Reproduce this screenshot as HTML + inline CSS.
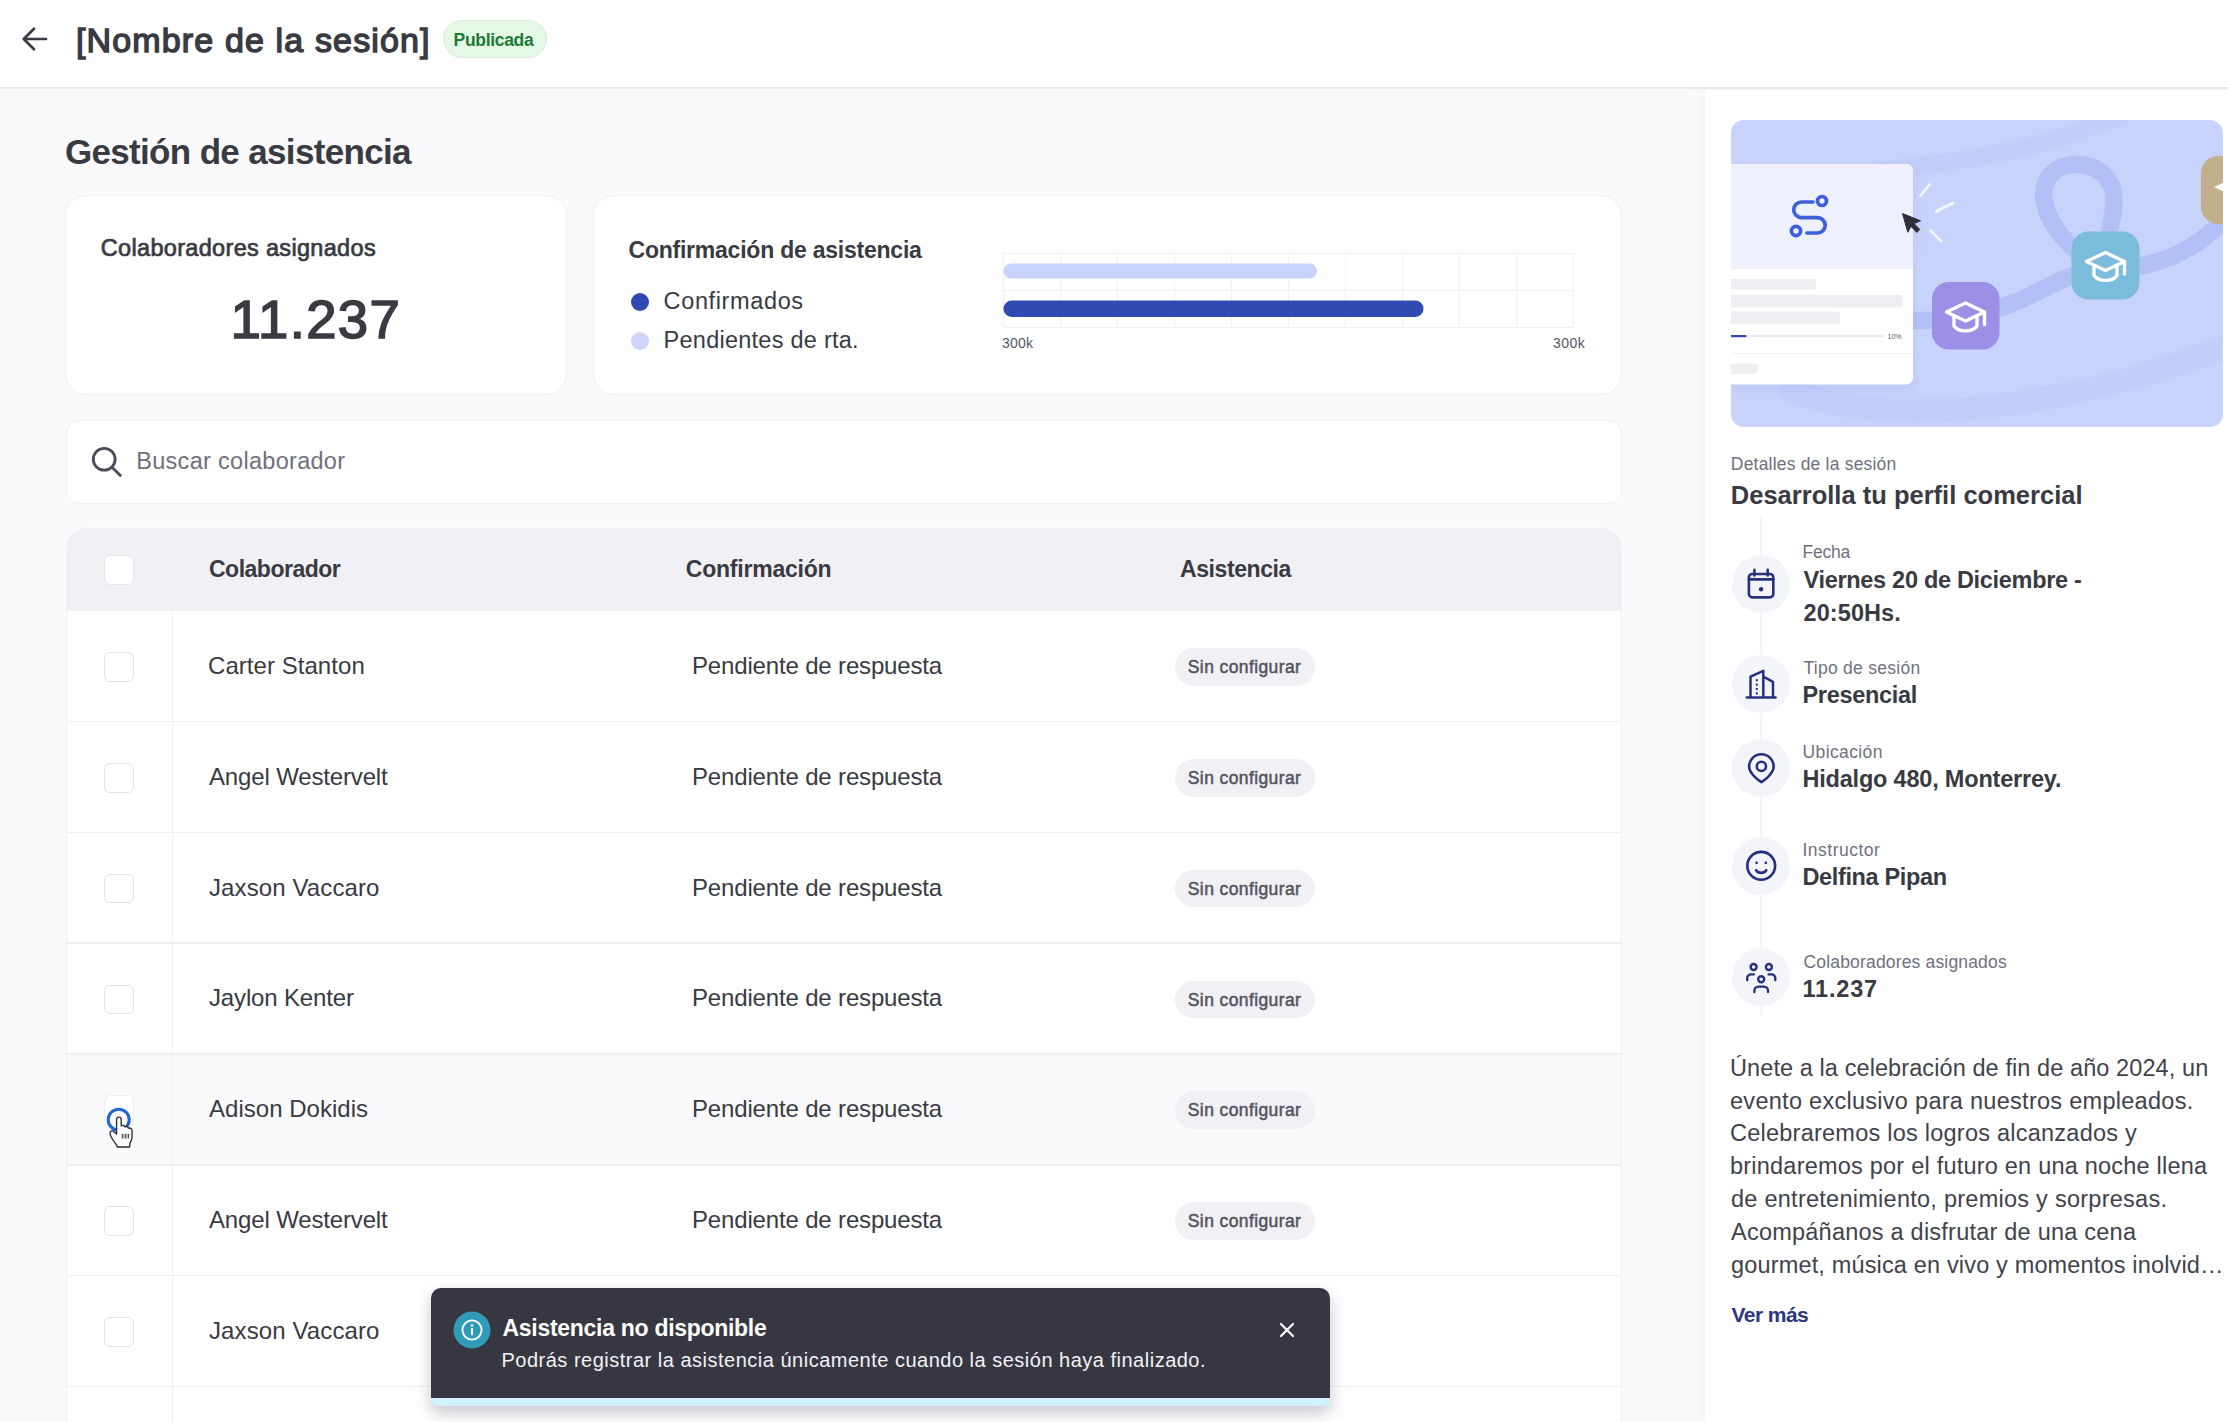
<!DOCTYPE html>
<html lang="es">
<head>
<meta charset="utf-8">
<title>Gestión de asistencia</title>
<style>
*{box-sizing:border-box;margin:0;padding:0}
html,body{width:2228px;height:1422px;overflow:hidden}
body{position:relative;background:#fafafc;font-family:"Liberation Sans",sans-serif;color:#393a42}
header,main,aside,.toast-layer{position:absolute;left:0;top:0;width:2228px;height:1422px}
.t{position:absolute;white-space:nowrap;line-height:1;font-weight:400;font-style:normal}
.m{-webkit-text-stroke:0.03em currentColor}
.b{font-weight:700}
h1.m{-webkit-text-stroke-width:0.042em}
.abs{position:absolute}
.hdr-bg{position:absolute;left:0;top:0;width:2228px;height:87px;background:#fff;border-bottom:0}
.hdr-line{position:absolute;left:0;top:87.2px;width:2228px;height:2.3px;background:#e9e9f0}
.badge{position:absolute;left:442.5px;top:20px;width:104.5px;height:37.5px;border-radius:19px;background:#e4f8e5;border:1px solid #d2f0d4}
.card{position:absolute;background:#fff;border:1.5px solid #f0f0f5;border-radius:21px}
.dot{position:absolute;width:18px;height:18px;border-radius:50%}
.cb{position:absolute;left:104px;width:29.5px;height:29.5px;border-radius:6px;background:#fff;border:1.5px solid #e1e1e9}
.pill{position:absolute;left:1175px;width:140px;height:37.5px;border-radius:19px;background:#f0f0f5}
.ic{position:absolute;left:1731.5px;width:58px;height:58px;border-radius:50%;background:#f4f4fb}
.panel{position:absolute;left:1704.5px;top:89.5px;width:524px;height:1333px;background:#fff;box-shadow:-6px 0 10px rgba(60,60,110,.018)}
</style>
</head>
<body>

<main>
  <h2 class="t b" style="left:64.9px;top:134.4px;font-size:35px;letter-spacing:-0.66px">Gestión de asistencia</h2>

  <section class="card" style="left:65px;top:195px;width:502px;height:200px"></section>
  <span class="t m" style="left:100.8px;top:237.4px;font-size:23.5px;letter-spacing:0.32px">Colaboradores asignados</span>
  <span class="t m" style="left:230.5px;top:293.1px;font-size:54.5px;letter-spacing:1.33px">11.237</span>

  <section class="card" style="left:593px;top:195px;width:1029px;height:200px"></section>
  <span class="t b" style="left:628.5px;top:239.4px;font-size:23px;letter-spacing:-0.23px">Confirmación de asistencia</span>
  <i class="dot" style="left:631px;top:292.5px;background:#3049b3"></i>
  <span class="t" style="left:663.6px;top:289.7px;font-size:23.5px;letter-spacing:0.63px">Confirmados</span>
  <i class="dot" style="left:631px;top:331.5px;background:#cdd3fb"></i>
  <span class="t" style="left:663.6px;top:328.9px;font-size:23.5px;letter-spacing:0.25px">Pendientes de rta.</span>
  <svg class="abs" style="left:1000px;top:250px" width="580" height="82" viewBox="1000 250 580 82">
    <g stroke="#f0f0f5" stroke-width="1" fill="none">
      <path d="M1003.5 253.5H1573.5M1003.5 290.5H1573.5M1003.5 327.5H1573.5"/>
      <path d="M1003.5 253V327M1060.5 253V327M1117.5 253V327M1174.5 253V327M1231.5 253V327M1288.5 253V327M1345.5 253V327M1402.5 253V327M1459.5 253V327M1516.5 253V327M1573.5 253V327"/>
    </g>
    <rect x="1003.5" y="263.5" width="313.5" height="15" rx="7.5" fill="#c9d2fb"/>
    <rect x="1003.5" y="300.5" width="420" height="16.5" rx="8.25" fill="#3049b3"/>
  </svg>
  <span class="t" style="left:1002.0px;top:336.3px;font-size:14px;letter-spacing:0.21px;color:#55555f">300k</span>
  <span class="t" style="left:1553.0px;top:336.3px;font-size:14px;letter-spacing:0.48px;color:#55555f">300k</span>

  <section class="card" style="left:65.5px;top:420px;width:1556.5px;height:83.5px;border-radius:13px"></section>
  <svg class="abs" style="left:88px;top:443px" width="38" height="38" viewBox="88 443 38 38" fill="none" stroke="#4b4b5a" stroke-width="2.8" stroke-linecap="round"><circle cx="104.2" cy="459.2" r="10.9"/><path d="M112.3 467.5L120.4 475.6"/></svg>
  <span class="t" style="left:136.2px;top:450.1px;font-size:23.5px;letter-spacing:0.30px;color:#70707c">Buscar colaborador</span>

  <!-- table -->
  <div class="abs" style="left:66px;top:528px;width:1555.5px;height:894px;background:#fff;border-radius:20px 20px 0 0;overflow:hidden;box-shadow:0 0 0 1px #fcfcfe">
    <div class="abs" style="left:0;top:0;width:1556px;height:83px;background:#f0f0f5"></div>
  </div>
  <div class="abs" style="left:66px;top:720.85px;width:1555.5px;height:1.5px;background:#eeeef3"></div>
  <div class="abs" style="left:66px;top:831.65px;width:1555.5px;height:1.5px;background:#eeeef3"></div>
  <div class="abs" style="left:66px;top:942.45px;width:1555.5px;height:1.5px;background:#eeeef3"></div>
  <div class="abs" style="left:66px;top:1053.25px;width:1555.5px;height:1.5px;background:#eeeef3"></div>
  <div class="abs" style="left:66px;top:1054.75px;width:1555.5px;height:109.30px;background:#fafafc"></div>
  <div class="abs" style="left:66px;top:1164.05px;width:1555.5px;height:1.5px;background:#eeeef3"></div>
  <div class="abs" style="left:66px;top:1274.85px;width:1555.5px;height:1.5px;background:#eeeef3"></div>
  <div class="abs" style="left:66px;top:1385.65px;width:1555.5px;height:1.5px;background:#eeeef3"></div>
  <div class="abs" style="left:171.5px;top:611px;width:1.5px;height:811px;background:#efeff4"></div>
  <div class="abs" style="left:66px;top:611px;width:1px;height:811px;background:#f0f0f5"></div>
  <div class="abs" style="left:1620.5px;top:611px;width:1px;height:811px;background:#f0f0f5"></div>

  <i class="cb" style="top:555px;border-color:#e4e4ec"></i>
  <span class="t b" style="left:209.0px;top:558.3px;font-size:23px;letter-spacing:-0.50px">Colaborador</span><span class="t b" style="left:685.8px;top:558.3px;font-size:23px;letter-spacing:-0.22px">Confirmación</span><span class="t b" style="left:1180.0px;top:558.3px;font-size:23px;letter-spacing:-0.42px">Asistencia</span>

  <i class="cb" style="top:652.20px"></i><span class="t" style="left:208.0px;top:654.0px;font-size:24px;letter-spacing:0.05px">Carter Stanton</span><span class="t" style="left:692.0px;top:654.0px;font-size:24px;letter-spacing:-0.16px">Pendiente de respuesta</span><i class="pill" style="top:648.20px"></i><span class="t m" style="left:1187.8px;top:659.1px;font-size:17.5px;letter-spacing:0.39px;color:#55555f">Sin configurar</span>
  <i class="cb" style="top:763.00px"></i><span class="t" style="left:209.0px;top:764.8px;font-size:24px;letter-spacing:-0.15px">Angel Westervelt</span><span class="t" style="left:692.0px;top:764.8px;font-size:24px;letter-spacing:-0.16px">Pendiente de respuesta</span><i class="pill" style="top:759.00px"></i><span class="t m" style="left:1187.8px;top:769.9px;font-size:17.5px;letter-spacing:0.39px;color:#55555f">Sin configurar</span>
  <i class="cb" style="top:873.80px"></i><span class="t" style="left:209.0px;top:875.6px;font-size:24px;letter-spacing:0.11px">Jaxson Vaccaro</span><span class="t" style="left:692.0px;top:875.6px;font-size:24px;letter-spacing:-0.16px">Pendiente de respuesta</span><i class="pill" style="top:869.80px"></i><span class="t m" style="left:1187.8px;top:880.7px;font-size:17.5px;letter-spacing:0.39px;color:#55555f">Sin configurar</span>
  <i class="cb" style="top:984.60px"></i><span class="t" style="left:209.0px;top:986.4px;font-size:24px;letter-spacing:-0.15px">Jaylon Kenter</span><span class="t" style="left:692.0px;top:986.4px;font-size:24px;letter-spacing:-0.16px">Pendiente de respuesta</span><i class="pill" style="top:980.60px"></i><span class="t m" style="left:1187.8px;top:991.5px;font-size:17.5px;letter-spacing:0.39px;color:#55555f">Sin configurar</span>
  <i class="cb" style="top:1095.40px;border-color:#ededf3;height:33px"></i><span class="t" style="left:209.0px;top:1097.2px;font-size:24px;letter-spacing:0.02px">Adison Dokidis</span><span class="t" style="left:692.0px;top:1097.2px;font-size:24px;letter-spacing:-0.16px">Pendiente de respuesta</span><i class="pill" style="top:1091.40px"></i><span class="t m" style="left:1187.8px;top:1102.3px;font-size:17.5px;letter-spacing:0.39px;color:#55555f">Sin configurar</span>
  <i class="cb" style="top:1206.20px"></i><span class="t" style="left:209.0px;top:1208.0px;font-size:24px;letter-spacing:-0.15px">Angel Westervelt</span><span class="t" style="left:692.0px;top:1208.0px;font-size:24px;letter-spacing:-0.16px">Pendiente de respuesta</span><i class="pill" style="top:1202.20px"></i><span class="t m" style="left:1187.8px;top:1213.1px;font-size:17.5px;letter-spacing:0.39px;color:#55555f">Sin configurar</span>
  <i class="cb" style="top:1317.00px"></i><span class="t" style="left:209.0px;top:1318.8px;font-size:24px;letter-spacing:0.11px">Jaxson Vaccaro</span><span class="t" style="left:692.0px;top:1318.8px;font-size:24px;letter-spacing:-0.16px">Pendiente de respuesta</span><i class="pill" style="top:1313.00px"></i><span class="t m" style="left:1187.8px;top:1323.9px;font-size:17.5px;letter-spacing:0.39px;color:#55555f">Sin configurar</span>
</main>

<aside>
  <div class="panel"></div>
  <!-- illustration -->
  <svg class="abs" style="left:1730.5px;top:120px" width="492" height="307" viewBox="0 0 492 307">
    <defs>
      <clipPath id="imgclip"><rect x="0" y="0" width="492" height="307" rx="13" ry="13"/></clipPath>
      <filter id="sh" x="-20%" y="-20%" width="140%" height="140%"><feGaussianBlur stdDeviation="4"/></filter>
    </defs>
    <g clip-path="url(#imgclip)">
      <rect width="492" height="307" fill="#c8d3fc"/>
      <!-- soft swooshes -->
      <path d="M150 50C260 40 340 20 400 -10" fill="none" stroke="#c3cdf9" stroke-width="18" stroke-linecap="round"/>
      <path d="M60 270C160 310 330 290 500 225" fill="none" stroke="#c3cdf9" stroke-width="24" stroke-linecap="round"/>
      <!-- route -->
      <path d="M170 200C220 203 262 194 300 175C322 164 345 152 372 146C350 140 318 110 313 80C310 55 328 44 347 44.500C368 45 385 60 383 85C381 110 372 125 374 146C400 152 440 142 470 120C480 112 488 106 497 99" fill="none" stroke="#b3c0f7" stroke-width="17.500" stroke-linecap="round" stroke-linejoin="round"/>
      <!-- card -->
      <rect x="-6" y="48" width="190" height="222" rx="8" fill="#8f9be0" opacity=".16" filter="url(#sh)"/>
      <path d="M-10 44H175a7 7 0 0 1 7 7V257.500a7 7 0 0 1 -7 7H-10Z" fill="#ffffff"/>
      <path d="M-10 44H175a7 7 0 0 1 7 7V149H-10Z" fill="#eef1fd"/>
      <!-- logo -->
      <g fill="none" stroke="#3d5fd9" stroke-width="3.700" stroke-linecap="round">
        <circle cx="91" cy="81" r="4.500"/>
        <circle cx="65" cy="111" r="4.6"/>
        <path d="M82 82H70.500a7.800 7.800 0 0 0 0 15.600H86.500a7.700 7.700 0 0 1 0 15.400H76"/>
      </g>
      <!-- skeleton -->
      <rect x="-5" y="159" width="90" height="10.500" rx="3" fill="#ededf2"/>
      <rect x="-5" y="175" width="176.500" height="12.500" rx="3" fill="#ededf2"/>
      <rect x="-5" y="191.500" width="114" height="12.500" rx="3" fill="#ededf2"/>
      <rect x="-5" y="215.300" width="158" height="1.400" fill="#e3e4ec"/>
      <rect x="-5" y="215" width="20.500" height="2.200" rx="1" fill="#3049b3"/>
      <text x="156.500" y="218.800" font-family="Liberation Sans, sans-serif" font-size="7" fill="#55555f">10%</text>
      <rect x="-5" y="233" width="187" height="1" fill="#f0f0f5"/>
      <rect x="-5" y="243.500" width="31.500" height="10.500" rx="3" fill="#ededf2"/>
      <!-- click lines -->
      <g stroke="#f4f6ff" stroke-width="2.600" stroke-linecap="round">
        <path d="M189.500 76L198.500 64.500M205 91.500L222 83M199.500 110.500L210 121"/>
      </g>
      <!-- cursor -->
      <path d="M171.500 93.500L189.500 100.800L183 103.600L188.800 109.600L185.800 112.400L180 106.400L176.800 112.300Z" fill="#2f2f3b" stroke="#2f2f3b" stroke-width="1" stroke-linejoin="round"/>
      <!-- purple -->
      <rect x="201" y="162" width="67.500" height="67.500" rx="17" fill="#9b8fe6"/>
      <g transform="translate(234.500 196.500)" fill="none" stroke="#fff" stroke-width="3.400" stroke-linejoin="round" stroke-linecap="round">
        <path d="M-19 -4.500L0 -13.500L19 -4.500L0 4.500Z"/><path d="M-11.500 0V9.500C-7 16 7 16 11.500 9.500V0"/><path d="M19 -4.500V8"/>
      </g>
      <!-- teal -->
      <rect x="340.500" y="111.500" width="68" height="68" rx="17" fill="#7bbcdc"/>
      <g transform="translate(374.500 146)" fill="none" stroke="#fff" stroke-width="3.400" stroke-linejoin="round" stroke-linecap="round">
        <path d="M-19 -4.500L0 -13.500L19 -4.500L0 4.500Z"/><path d="M-11.500 0V9.500C-7 16 7 16 11.500 9.500V0"/><path d="M19 -4.500V8"/>
      </g>
      <!-- tan -->
      <rect x="470" y="36" width="68" height="68" rx="17" fill="#c2b08c"/>
      <path d="M483 67L498 60V74Z" fill="#fff"/>
    </g>
  </svg>

  <span class="t" style="left:1730.8px;top:456.4px;font-size:17.5px;letter-spacing:0.20px;color:#70707c">Detalles de la sesión</span>
  <h3 class="t b" style="left:1730.8px;top:483.4px;font-size:25.5px;letter-spacing:0.01px">Desarrolla tu perfil comercial</h3>

  <!-- timeline -->
  <div class="abs" style="left:1760px;top:517px;width:1.5px;height:498px;background:#f5f5f9"></div>
  <i class="ic" style="top:555px"></i>
  <i class="ic" style="top:654.5px"></i>
  <i class="ic" style="top:738.5px"></i>
  <i class="ic" style="top:836.5px"></i>
  <i class="ic" style="top:948px"></i>

  <!-- calendar -->
  <svg class="abs" style="left:1744.5px;top:568px" width="32" height="32" viewBox="0 0 32 32" fill="none" stroke="#25317e" stroke-width="2.600" stroke-linecap="round" stroke-linejoin="round"><rect x="3.900" y="6" width="24.400" height="23.400" rx="3.400"/><path d="M3.900 11.400H28.300M9.400 1.900V7.400M22.700 1.900V7.400"/><circle cx="16.100" cy="21.300" r="2.200" fill="#25317e" stroke="none"/></svg>
  <!-- building -->
  <svg class="abs" style="left:1744.500px;top:667.500px" width="33" height="32" viewBox="0 0 33 32" fill="none" stroke="#25317e" stroke-width="2.500" stroke-linecap="round" stroke-linejoin="round"><path d="M1.800 29.400H30.600M5.500 29V8.700L18.300 2.900V29M18.300 8.700L28 13.900V29"/><path d="M11.800 12.200V25.600" stroke-width="2.300" stroke-dasharray="0.100 4.300"/></svg>
  <!-- pin -->
  <svg class="abs" style="left:1744.500px;top:751.500px" width="33" height="33" viewBox="0 0 33 33" fill="none" stroke="#25317e" stroke-width="2.600" stroke-linecap="round" stroke-linejoin="round"><path d="M16.400 30.200C16.400 30.200 28.700 22.600 28.700 14.600A12.300 12.300 0 0 0 4.100 14.600C4.100 22.600 16.400 30.200 16.400 30.200Z"/><circle cx="16.400" cy="14.400" r="4.600"/></svg>
  <!-- smile -->
  <svg class="abs" style="left:1744.500px;top:849.500px" width="33" height="33" viewBox="0 0 33 33" fill="none" stroke="#25317e" stroke-width="2.600" stroke-linecap="round" stroke-linejoin="round"><circle cx="16.200" cy="15.800" r="13.900"/><path d="M11.100 20.200C13.500 23.700 18.900 23.700 21.300 20.200"/><circle cx="11.600" cy="12.800" r="1.400" fill="#25317e" stroke="none"/><circle cx="20.800" cy="12.800" r="1.400" fill="#25317e" stroke="none"/></svg>
  <!-- people -->
  <svg class="abs" style="left:1744.500px;top:961px" width="33" height="33" viewBox="0 0 33 33" fill="none" stroke="#25317e" stroke-width="2.400" stroke-linecap="round" stroke-linejoin="round"><circle cx="8.600" cy="6" r="3"/><circle cx="23.900" cy="6" r="3"/><circle cx="16.200" cy="18.300" r="3"/><path d="M2.200 19V17.200A3.800 3.800 0 0 1 6 13.400H8.800M30.300 19V17.200A3.800 3.800 0 0 0 26.500 13.400H23.700M9.400 31V29.600A4 4 0 0 1 13.400 25.600H19A4 4 0 0 1 23 29.600V31"/></svg>

  <span class="t" style="left:1802.5px;top:543.5px;font-size:17.5px;letter-spacing:-0.20px;color:#70707c">Fecha</span><span class="t b" style="left:1803.5px;top:568.7px;font-size:23.5px;letter-spacing:-0.30px">Viernes 20 de Diciembre -</span><span class="t b" style="left:1803.5px;top:601.6px;font-size:23.5px;letter-spacing:0.09px">20:50Hs.</span>
  <span class="t" style="left:1803.5px;top:659.8px;font-size:17.5px;letter-spacing:0.27px;color:#70707c">Tipo de sesión</span><span class="t b" style="left:1802.5px;top:683.9px;font-size:23.5px;letter-spacing:-0.32px">Presencial</span>
  <span class="t" style="left:1802.5px;top:743.9px;font-size:17.5px;letter-spacing:0.39px;color:#70707c">Ubicación</span><span class="t b" style="left:1802.5px;top:768.1px;font-size:23.5px;letter-spacing:-0.20px">Hidalgo 480, Monterrey.</span>
  <span class="t" style="left:1802.5px;top:841.8px;font-size:17.5px;letter-spacing:0.49px;color:#70707c">Instructor</span><span class="t b" style="left:1802.5px;top:866.1px;font-size:23.5px;letter-spacing:-0.36px">Delfina Pipan</span>
  <span class="t" style="left:1803.5px;top:954.2px;font-size:17.5px;letter-spacing:0.17px;color:#70707c">Colaboradores asignados</span><span class="t b" style="left:1802.5px;top:978.1px;font-size:23.5px;letter-spacing:0.80px">11.237</span>

  <p><span class="t" style="left:1730.0px;top:1056.6px;font-size:23.5px;letter-spacing:0.09px;color:#42424b">Únete a la celebración de fin de año 2024, un</span><span class="t" style="left:1730.0px;top:1089.5px;font-size:23.5px;letter-spacing:0.28px;color:#42424b">evento exclusivo para nuestros empleados.</span><span class="t" style="left:1730.0px;top:1122.3px;font-size:23.5px;letter-spacing:0.24px;color:#42424b">Celebraremos los logros alcanzados y</span><span class="t" style="left:1730.0px;top:1155.2px;font-size:23.5px;letter-spacing:0.22px;color:#42424b">brindaremos por el futuro en una noche llena</span><span class="t" style="left:1731.0px;top:1188.0px;font-size:23.5px;letter-spacing:0.26px;color:#42424b">de entretenimiento, premios y sorpresas.</span><span class="t" style="left:1731.0px;top:1220.9px;font-size:23.5px;letter-spacing:0.23px;color:#42424b">Acompáñanos a disfrutar de una cena</span><span class="t" style="left:1731.0px;top:1253.7px;font-size:23.5px;letter-spacing:0.16px;color:#42424b">gourmet, música en vivo y momentos inolvid…</span></p>
  <span class="t b" style="left:1731.5px;top:1303.8px;font-size:21px;letter-spacing:-0.56px;color:#2c3780">Ver más</span>
</aside>

<header>
  <div class="hdr-bg"></div><div class="hdr-line"></div>
  <svg class="abs" style="left:18px;top:24px" width="34" height="30" viewBox="18 24 34 30" fill="none" stroke="#393a42" stroke-width="2.7" stroke-linecap="round" stroke-linejoin="round"><path d="M46 39H24.5M34 28.8L23.8 39L34 49.2"/></svg>
  <h1 class="t m" style="left:76.0px;top:22.6px;font-size:34px;letter-spacing:1.14px">[Nombre de la sesión]</h1>
  <div class="badge"></div>
  <span class="t b" style="left:453.6px;top:31.7px;font-size:17.5px;letter-spacing:-0.32px;color:#1c7a36">Publicada</span>
</header>

<div class="toast-layer">
  <svg class="abs" style="left:104px;top:1090px" width="40" height="62" viewBox="0 0 40 62">
    <circle cx="14.700" cy="29.700" r="10.500" fill="none" stroke="#1e66d8" stroke-width="3.100"/>
    <path d="M12.600 44V29.400a2.300 2.300 0 0 1 4.600 0V35.800c1.400-.8 3.200-.4 3.700 1c1.400-.7 3.100-.1 3.500 1.300c1.700-.5 3.600 .5 3.600 2.400V47.500c0 3-1.800 4.400-2.300 6.300V57H13.400c-.6-3-4.400-6-6.300-10.200c-1-2.200-1.400-3.400-1-4.600c.6-1.600 2.600-1.800 3.800-.4Z" fill="#fff" stroke="#2c2c34" stroke-width="1.350" stroke-linejoin="round"/>
    <path d="M18.600 43.800V48.600M21.500 43.800V48.600M24.400 43.800V48.600" stroke="#5a5a62" stroke-width="1.700"/>
  </svg>
  <div class="abs" style="left:430.5px;top:1287.5px;width:899px;height:118.3px;border-radius:10px 10px 5px 7px;box-shadow:0 7px 16px rgba(30,30,60,.25);background:#d1f4fc;overflow:hidden">
    <div class="abs" style="left:0;top:0;width:899px;height:110.500px;background:#373741"></div>
  </div>
  <svg class="abs" style="left:453px;top:1311px" width="38" height="38" viewBox="0 0 38 38"><circle cx="19" cy="19" r="18.500" fill="#2e9bb8"/><circle cx="19" cy="19" r="9.600" fill="none" stroke="#fff" stroke-width="1.900"/><path d="M19 17.800V23.500" stroke="#fff" stroke-width="2.100" stroke-linecap="round"/><circle cx="19" cy="14.500" r="1.300" fill="#fff"/></svg>
  <span class="t b" style="left:502.5px;top:1316.5px;font-size:23px;letter-spacing:-0.29px;color:#ffffff">Asistencia no disponible</span>
  <span class="t" style="left:501.5px;top:1349.9px;font-size:20px;letter-spacing:0.50px;color:#f2f2f7">Podrás registrar la asistencia únicamente cuando la sesión haya finalizado.</span>
  <svg class="abs" style="left:1277px;top:1320px" width="20" height="20" viewBox="0 0 20 20" fill="none" stroke="#fff" stroke-width="2.200" stroke-linecap="round"><path d="M4 4L16 16M16 4L4 16"/></svg>
</div>

</body>
</html>
